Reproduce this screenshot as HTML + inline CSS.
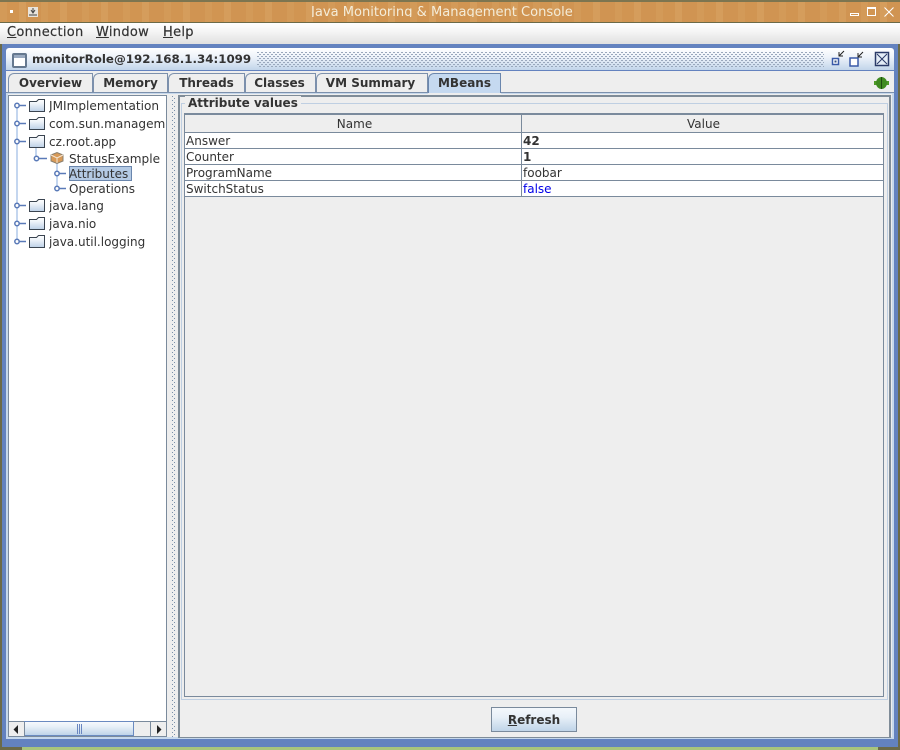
<!DOCTYPE html>
<html><head><meta charset="utf-8"><style>
html,body{margin:0;padding:0;background:#eee}
body{width:900px;height:750px;overflow:hidden;position:relative;font-family:"DejaVu Sans",sans-serif;font-size:12px;color:#333}
.a{position:absolute;box-sizing:border-box;white-space:nowrap}
.b{font-weight:bold}
.tab{position:absolute;top:73px;height:20px;background:#eee;border:1px solid #7c90ac;border-bottom:none;border-radius:6px 0 0 0;box-sizing:border-box;font-weight:bold;font-size:12px;line-height:18px;text-align:center;color:#333}
.row{position:absolute;left:185px;width:698px;height:16px;box-sizing:border-box;background:#fff;border-bottom:1px solid #7a8a9c;line-height:15px}
.row span{position:absolute;top:0}
.t{position:absolute;line-height:14px;white-space:nowrap;font-size:12px}
.m{font-size:13px;letter-spacing:.3px;-webkit-text-stroke:.2px #333}
</style></head><body>
<div class="a" style="left:0;top:0;width:900px;height:23px;background:repeating-linear-gradient(90deg,#d39a58 0 7px,#d19552 7px 19px,#d59d5c 19px 26px,#d09452 26px 41px);border-top:2px solid #7d7550;border-bottom:1px solid #6b6a48;overflow:hidden">
<div class="a" style="left:311px;top:3px;width:264px;height:12px;overflow:hidden;color:#f4ecd8;font-size:13.05px;line-height:15px;">Java Monitoring &amp; Management Console</div>
<div class="a" style="left:10px;top:8px;width:3px;height:3px;background:#fff"></div>
<div class="a" style="left:28px;top:5px;width:10px;height:10px;background:#e9e4dc"><svg class="a" style="left:0;top:0" width="10" height="10"><path d="M5 1V5M3 3L5 6L7 3M1 8H9" stroke="#444" fill="none"/></svg></div>
<div class="a" style="left:850px;top:11px;width:9px;height:3px;border:1px solid #fff"></div>
<div class="a" style="left:867px;top:5px;width:9px;height:9px;border:1px solid #fff;border-top-width:2px"></div>
<svg class="a" style="left:884px;top:5px" width="10" height="10"><path d="M0.5 0.5L9.5 9.5M9.5 0.5L0.5 9.5" stroke="#fff" stroke-width="1"/></svg>
</div>

<div class="a" style="left:0;top:23px;width:900px;height:21px;background:linear-gradient(#fff 0,#f5f5f5 40%,#e0e0e0 100%)"></div>
<div class="t m" style="left:7px;top:26px"><u>C</u>onnection</div>
<div class="t m" style="left:96px;top:26px"><u>W</u>indow</div>
<div class="t m" style="left:163px;top:26px"><u>H</u>elp</div>

<div class="a" style="left:0;top:44px;width:900px;height:706px;background:#6382bf"></div>
<div class="a" style="left:0;top:44px;width:2px;height:703px;background:#6b6a48"></div>
<div class="a" style="left:898px;top:44px;width:2px;height:703px;background:#6b6a48"></div>
<div class="a" style="left:0;top:747px;width:900px;height:3px;background:#a8c47c"></div>
<div class="a" style="left:0;top:747px;width:22px;height:3px;background:#6b6a48"></div>
<div class="a" style="left:878px;top:747px;width:22px;height:3px;background:#6b6a48"></div>

<div class="a" style="left:6px;top:48px;width:888px;height:23px;background:linear-gradient(#fff,#eef3fa 40%,#c2d5ea);border-bottom:1px solid #6382bf;border-radius:3px 3px 0 0"></div>
<svg class="a" style="left:257px;top:52px" width="567" height="16"><defs><pattern id="t" width="4" height="4" patternUnits="userSpaceOnUse"><rect x="0" y="0" width="2" height="1" fill="#9aa8bc"/><rect x="2" y="2" width="2" height="1" fill="#9aa8bc"/></pattern></defs><rect width="567" height="16" fill="url(#t)"/></svg>
<div class="a" style="left:12px;top:53px;width:15px;height:15px;border:2px solid #65788f;border-radius:2px;background:#fff"><div class="a" style="left:0;top:0;width:11px;height:3px;background:#9aaac0"></div></div>
<div class="t b" style="left:32px;top:52px;color:#333;font-size:11.85px">monitorRole@192.168.1.34:1099</div>

<svg class="a" style="left:830px;top:50px" width="66" height="20" fill="none">
<rect x="2.5" y="8.5" width="6" height="6" fill="#fff" stroke="#3a5aa8" stroke-width="1.5"/><rect x="4.5" y="10.5" width="2" height="2" fill="#34507f"/>
<path d="M14 1L9 6M9 2V6H13" stroke="#222"/>
<rect x="20" y="8" width="8" height="8" fill="#fff" stroke="#3a5aa8" stroke-width="1.5"/>
<path d="M33 2L28 7M28 3V7H32" stroke="#222"/>
<rect x="45.5" y="2.5" width="13" height="13" fill="#e4edf7" stroke="#2a3a68" stroke-width="1.5"/>
<path d="M47 4L57 14M57 4L47 14" stroke="#2a3a68"/>
</svg>

<div class="a" style="left:6px;top:71px;width:888px;height:24px;background:#eee"></div>
<div class="tab" style="left:8px;width:85px">Overview</div>
<div class="tab" style="left:93px;width:75px">Memory</div>
<div class="tab" style="left:168px;width:77px">Threads</div>
<div class="tab" style="left:245px;width:71px;padding-right:2px">Classes</div>
<div class="tab" style="left:316px;width:112px;padding-right:3px">VM Summary</div>
<div class="tab" style="left:428px;width:73px;background:#c5d9f0;border-color:#6a86ad">MBeans</div>

<svg class="a" style="left:874px;top:76px" width="15" height="14">
<rect x="0" y="5" width="15" height="4" fill="#4e9a28"/>
<ellipse cx="7.5" cy="7" rx="5.5" ry="6" fill="#3f8a20"/>
<rect x="7" y="1" width="1" height="12" fill="#1e4a10"/>
</svg>

<div class="a" style="left:6px;top:93px;width:888px;height:646px;background:#eee"></div>
<div class="a" style="left:6px;top:92px;width:422px;height:2px;background:#c6d8ec"></div>
<div class="a" style="left:501px;top:92px;width:393px;height:2px;background:#c6d8ec"></div>
<div class="a" style="left:6px;top:92px;width:422px;height:1px;background:#7c90ac"></div>
<div class="a" style="left:501px;top:92px;width:393px;height:1px;background:#7c90ac"></div>
<div class="a" style="left:6px;top:93px;width:2px;height:646px;background:#c6d8ec"></div>
<div class="a" style="left:892px;top:93px;width:2px;height:646px;background:#c6d8ec"></div>
<div class="a" style="left:6px;top:737px;width:888px;height:2px;background:#c6d8ec"></div>

<div class="a" style="left:8px;top:95px;width:159px;height:642px;background:#fff;border:1px solid #7a8a9c"></div>

<svg class="a" style="left:9px;top:96px" width="157" height="160" fill="none">
<defs><linearGradient id="g" x1="0" y1="0" x2="0" y2="1"><stop offset="0" stop-color="#fff"/><stop offset=".35" stop-color="#eef3f9"/><stop offset="1" stop-color="#bcd0e6"/></linearGradient></defs>
<g stroke="#b0c8ea" stroke-width="1.5"><path d="M8 10V145M27 50V62M48 63V92"/></g>
<g stroke="#5a7ab8" stroke-width="1.5" fill="#fff">
<path d="M10 9.5H17M10 27.5H17M10 45.5H17M10 109.5H17M10 127.5H17M10 145.5H17M30 62.5H38M50 77.5H57M50 92.5H57"/>
<circle cx="8" cy="9.5" r="2.2"/><circle cx="8" cy="27.5" r="2.2"/><circle cx="8" cy="45.5" r="2.2"/><circle cx="8" cy="109.5" r="2.2"/><circle cx="8" cy="127.5" r="2.2"/><circle cx="8" cy="145.5" r="2.2"/>
<circle cx="27.5" cy="62.5" r="2.2"/><circle cx="48" cy="77.5" r="2.2"/><circle cx="48" cy="92.5" r="2.2"/>
</g>
<g fill="url(#g)" stroke="#3a4450">
<path d="M20.5 5.5H27.5L29.5 3.5H35.5V15.5H20.5Z"/>
<path d="M20.5 23.5H27.5L29.5 21.5H35.5V33.5H20.5Z"/>
<path d="M20.5 41.5H27.5L29.5 39.5H35.5V51.5H20.5Z"/>
<path d="M20.5 105.5H27.5L29.5 103.5H35.5V115.5H20.5Z"/>
<path d="M20.5 123.5H27.5L29.5 121.5H35.5V133.5H20.5Z"/>
<path d="M20.5 141.5H27.5L29.5 139.5H35.5V151.5H20.5Z"/>
</g>
<path d="M42 59L48 56.5L54 59V65L48 67.5L42 65Z" fill="#d89a58" stroke="#8a8070"/>
<path d="M42 59L48 62L54 59M48 62V67" stroke="#f4e8d8"/>
</svg>
<div class="a" style="left:69px;top:166px;width:63px;height:15px;background:#b4cae4;border:1px solid #6a86ad"></div>
<div class="a" style="left:49px;top:96px;width:116px;height:160px;overflow:hidden;font-size:12.05px">
<div class="t" style="left:0;top:3px;font-size:12.1px">JMImplementation</div>
<div class="t" style="left:0;top:21px;font-size:12.1px">com.sun.management</div>
<div class="t" style="left:0;top:39px">cz.root.app</div>
<div class="t" style="left:20px;top:56px;font-size:12.1px">StatusExample</div>
<div class="t" style="left:20px;top:71px">Attributes</div>
<div class="t" style="left:20px;top:86px">Operations</div>
<div class="t" style="left:0;top:103px">java.lang</div>
<div class="t" style="left:0;top:121px">java.nio</div>
<div class="t" style="left:0;top:139px">java.util.logging</div>
</div>

<div class="a" style="left:9px;top:721px;width:157px;height:15px;background:#eee;border-top:1px solid #7a8a9c"></div>
<div class="a" style="left:24px;top:721px;width:110px;height:15px;background:linear-gradient(#f6f9fd,#e8f0f8 35%,#bfd3e8);border:1px solid #6a8ac0"></div>
<div class="a" style="left:24px;top:722px;width:1px;height:14px;background:#7a8a9c"></div>
<div class="a" style="left:150px;top:722px;width:1px;height:14px;background:#7a8a9c"></div>
<svg class="a" style="left:9px;top:722px" width="157" height="14">
<path d="M9 3V12L4.5 7.5Z M152.5 7.5L148 3V12Z" fill="#222"/>
<path d="M68.5 2V12M70.5 2V12M72.5 2V12" stroke="#6a86c0"/>
</svg>

<svg class="a" style="left:172px;top:95px" width="4" height="642"><defs><pattern id="d" width="4" height="4" patternUnits="userSpaceOnUse"><rect x="0" y="1" width="1" height="1" fill="#7a90aa"/><rect x="2" y="3" width="1" height="1" fill="#7a90aa"/></pattern></defs><rect width="4" height="642" fill="url(#d)"/></svg>

<div class="a" style="left:178px;top:95px;width:713px;height:643px;background:#eee;border:2px solid #7f8c98;border-bottom-width:1px"></div>
<div class="a" style="left:181px;top:103px;width:707px;height:597px;border:1px solid #bfcfe2"></div>
<div class="t b" style="left:185px;top:96px;background:#eee;padding:0 3px">Attribute values</div>
<div class="a" style="left:184px;top:113px;width:700px;height:584px;background:#eee;border:1px solid #7a8a9c;border-width:2px 1px 1px 1px"></div>
<div class="a" style="left:185px;top:115px;width:698px;height:18px;background:#eee;border-bottom:1px solid #7a8a9c"></div>
<div class="a" style="left:186px;top:117px;width:337px;text-align:center;line-height:14px">Name</div>
<div class="a" style="left:523px;top:117px;width:361px;text-align:center;line-height:14px">Value</div>

<div class="row" style="top:133px"><span style="left:1px;top:1px">Answer</span><span class="b" style="left:338px;top:1px">42</span></div>
<div class="row" style="top:149px"><span style="left:1px;top:1px">Counter</span><span class="b" style="left:338px;top:1px">1</span></div>
<div class="row" style="top:165px"><span style="left:1px;top:1px">ProgramName</span><span style="left:338px;top:1px">foobar</span></div>
<div class="row" style="top:181px"><span style="left:1px;top:1px">SwitchStatus</span><span style="left:338px;top:1px;color:#0000e8">false</span></div>
<div class="a" style="left:521px;top:115px;width:1px;height:82px;background:#7a8a9c"></div>

<div class="a b" style="left:491px;top:707px;width:86px;height:25px;background:linear-gradient(#f4f8fc,#e8f0f8 40%,#bfd4e8);border:1px solid #7a8a9c;text-align:center;line-height:24px;font-size:12px"><u>R</u>efresh</div>
</body></html>
